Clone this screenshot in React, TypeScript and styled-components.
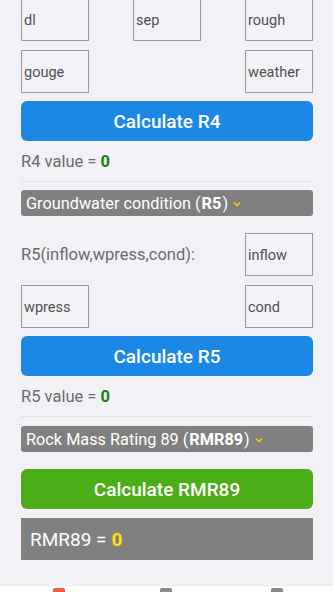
import React from 'react';
import styled, { createGlobalStyle } from 'styled-components';

const GlobalStyle = createGlobalStyle`
  html, body {
    margin: 0;
    padding: 0;
    background: #f2f1f5;
    font-family: Roboto, 'Noto Sans', Arial, sans-serif;
    overflow: hidden;
  }
`;

const Page = styled.div`
  height: 592px;
  display: flex;
  flex-direction: column;
  overflow: hidden;
`;

const Content = styled.div`
  flex: 1;
  display: flex;
  flex-direction: column;
  padding: 0 20px 0 21px;
  margin-top: -2px;
`;

const InputRow = styled.div<{ $gap?: number }>`
  display: flex;
  justify-content: space-between;
  align-items: center;
  margin-top: ${(p) => p.$gap ?? 9}px;
  &:first-child {
    margin-top: 0;
  }
`;

const Field = styled.input`
  box-sizing: border-box;
  width: 68px;
  height: 43px;
  border: 1px solid #9b9b9b;
  background: #f3f2f6;
  padding: 2px 2px 0;
  font-family: Roboto, Arial, sans-serif;
  font-size: 14.5px;
  color: #333;
  outline: none;
  &::placeholder {
    color: #505050;
  }
`;

const Spacer = styled.div`
  width: 68px;
`;

const RowLabel = styled.span`
  font-size: 16.5px;
  color: #6b6b6b;
`;

const CalcButton = styled.button<{ $color: string; $gap?: number }>`
  margin-top: ${(p) => p.$gap ?? 8}px;
  height: 40px;
  border: none;
  border-radius: 6px;
  background: ${(p) => p.$color};
  color: #fff;
  font-family: Roboto, Arial, sans-serif;
  font-size: 19px;
  font-weight: 500;
  padding: 0;
`;

const ValueLine = styled.div`
  margin-top: 10px;
  height: 22px;
  line-height: 22px;
  font-size: 16.5px;
  color: #6b6b6b;
  b {
    color: #1b7d1b;
    font-weight: 700;
  }
`;

const Divider = styled.hr`
  margin: 8px 0 0;
  border: none;
  border-top: 1px solid #e1e0e4;
`;

const SectionBar = styled.div<{ $gap?: number }>`
  margin-top: ${(p) => p.$gap ?? 8}px;
  height: 26px;
  border-radius: 3px;
  background: #808080;
  color: #fff;
  font-size: 16.3px;
  display: flex;
  align-items: center;
  padding-left: 5px;
  white-space: nowrap;
  b {
    font-weight: 700;
    margin: 0 1px;
  }
  svg {
    margin-left: 5px;
    margin-top: 1px;
  }
`;

const ResultBox = styled.div`
  margin-top: 9px;
  height: 42px;
  background: #808080;
  color: #fff;
  font-size: 19px;
  display: flex;
  align-items: center;
  padding-left: 9px;
  b {
    color: #ffe100;
    font-weight: 700;
    margin-left: 5px;
  }
`;

const NavBar = styled.div`
  height: 6px;
  background: #fff;
  position: relative;
  border-top: 1px solid #ececee;
`;

const NavMark = styled.span<{ $left: number; $color: string }>`
  position: absolute;
  top: 2px;
  left: ${(p) => p.$left}px;
  width: 12px;
  height: 4px;
  border-radius: 2px 2px 0 0;
  background: ${(p) => p.$color};
`;

const Chevron = () => (
  <svg width="8" height="6" viewBox="0 0 8 6">
    <polyline points="1,1.5 4,4.5 7,1.5" fill="none" stroke="#e8d400" strokeWidth="1.6" />
  </svg>
);

export default function App() {
  return (
    <Page>
      <GlobalStyle />
      <Content>
        <InputRow>
          <Field placeholder="dl" />
          <Field placeholder="sep" />
          <Field placeholder="rough" />
        </InputRow>
        <InputRow>
          <Field placeholder="gouge" />
          <Spacer />
          <Field placeholder="weather" />
        </InputRow>
        <CalcButton $color="#1c88e5">Calculate R4</CalcButton>
        <ValueLine>
          R4 value = <b>0</b>
        </ValueLine>
        <Divider />
        <SectionBar>
          Groundwater condition (<b>R5</b>)
          <Chevron />
        </SectionBar>
        <InputRow $gap={17}>
          <RowLabel>R5(inflow,wpress,cond):</RowLabel>
          <Field placeholder="inflow" />
        </InputRow>
        <InputRow>
          <Field placeholder="wpress" />
          <Spacer />
          <Field placeholder="cond" />
        </InputRow>
        <CalcButton $color="#1c88e5">Calculate R5</CalcButton>
        <ValueLine>
          R5 value = <b>0</b>
        </ValueLine>
        <Divider />
        <SectionBar $gap={9}>
          Rock Mass Rating 89 (<b>RMR89</b>)
          <Chevron />
        </SectionBar>
        <CalcButton $color="#4cae17" $gap={17}>
          Calculate RMR89
        </CalcButton>
        <ResultBox>
          RMR89 = <b>0</b>
        </ResultBox>
      </Content>
      <NavBar>
        <NavMark $left={53} $color="#f05a3c" />
        <NavMark $left={160} $color="#8a8a8a" />
        <NavMark $left={271} $color="#8a8a8a" />
      </NavBar>
    </Page>
  );
}
